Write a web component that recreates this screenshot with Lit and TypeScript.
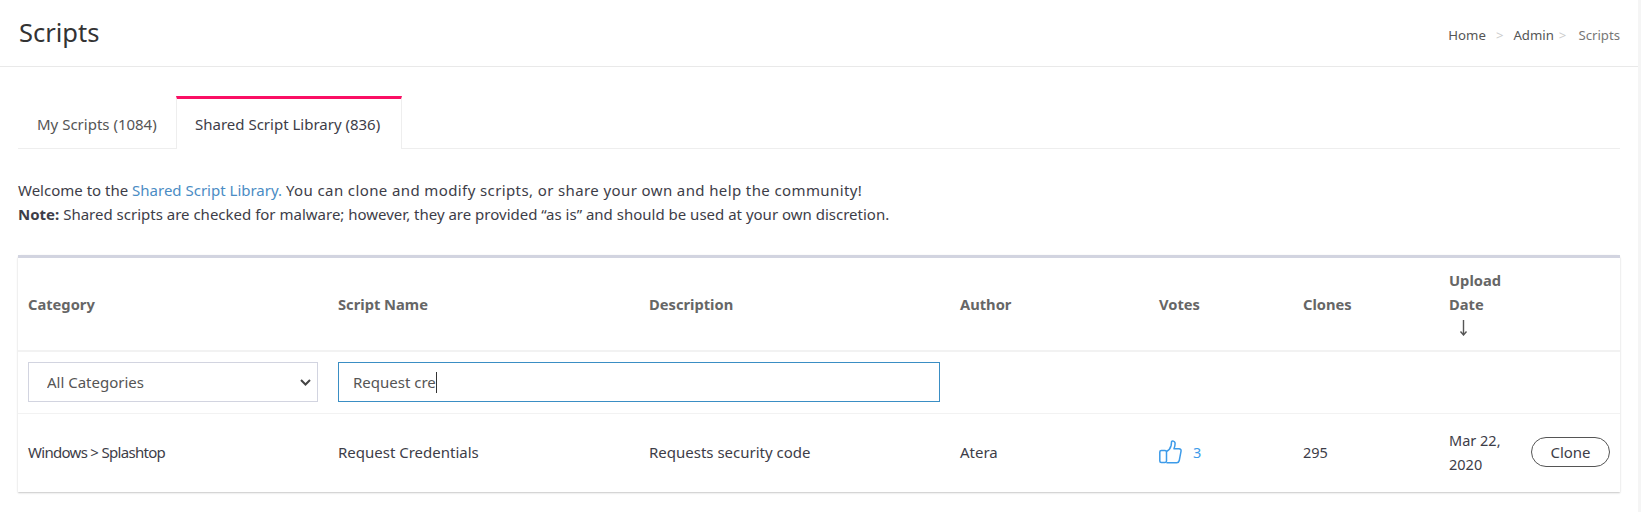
import { LitElement, html, css } from "lit";
import { customElement } from "lit/decorators.js";

@customElement("app-root")
export class AppRoot extends LitElement {
  static styles = css`
    :host { display: block; min-height: 100vh; background: #f5f5f5; font-family: "Noto Sans", "Lato", sans-serif; font-size: 15px; line-height: 24px; color: #3d3d48; }
    .page { margin-right: 3px; min-height: 100vh; background: #fff; box-sizing: border-box; }
    .head { height: 67px; box-sizing: border-box; border-bottom: 1px solid #e9e9e9; display: flex; align-items: center; justify-content: space-between; padding: 0 18px 0 19px; }
    .title { font-size: 25.5px; line-height: 34px; color: #333; margin: 0 0 3px; font-weight: 400; }
    .crumbs { display: flex; align-items: center; font-size: 13.2px; color: #555; margin-top: 4px; }
    .crumbs .sep { color: #ccc; margin: 0 10px; }
    .crumbs .sep.b { margin: 0 12px 0 5px; }
    .crumbs .cur { color: #777; }
    .body { padding: 29px 18px 0 18px; }
    .tabs { display: flex; height: 52px; border-bottom: 1px solid #eee; }
    .tab { box-sizing: border-box; width: 158px; height: 52px; padding: 16px 0 0 19px; color: #555; }
    .tab.active { height: 53px; width: 226px; border: 1px solid #eee; border-top: 3px solid #fa0f64; border-bottom: 0; background: #fff; padding: 13px 0 0 18px; color: #3d3d48; }
    .intro { margin: 29px 0 0; }
    .intro a { color: #4a8cc4; text-decoration: none; }
    .intro b { font-weight: 700; }
    .wide { letter-spacing: .39px; }
    table { margin-top: 29px; width: 100%; border-collapse: collapse; table-layout: fixed; border-top: 3px solid #d2d4e0; border-radius: 3px 3px 0 0; box-shadow: 0 1px 2px rgba(0,0,0,.22), 0 0 1px rgba(0,0,0,.04); }
    th { text-align: left; font-size: 14.7px; font-weight: 700; color: #666; padding: 10px; vertical-align: middle; border-bottom: 2px solid #f2f2f2; }
    .upload { width: 70px; }
    .arrow { display: block; margin: 4px 0 4px 10px; }
    .filters td { height: 62px; padding: 0 10px; border-bottom: 1px solid #f2f2f2; vertical-align: middle; box-sizing: border-box; }
    .select-wrap { position: relative; height: 40px; }
    select { appearance: none; display: block; width: 100%; height: 40px; box-sizing: border-box; border: 1px solid #d2d4e0; border-radius: 0; background: #fff; font: inherit; color: #555; padding: 0 0 0 18px; }
    .chev { position: absolute; right: 7px; top: 17px; pointer-events: none; }
    .input { height: 40px; box-sizing: border-box; border: 1px solid #3a8ec4; display: flex; align-items: center; padding-left: 14px; color: #555; }
    .caret { width: 1px; height: 21px; background: #333; }
    .row td { height: 79px; padding: 0 10px 2px; vertical-align: middle; box-sizing: border-box; }
    .tight { letter-spacing: -.7px; }
    .num { font-size: 14.5px; }
    .votes { display: flex; align-items: center; gap: 10px; color: #3d9be9; }
    .date-cell { display: flex; align-items: center; justify-content: space-between; font-size: 14.5px; }
    .date { width: 70px; }
    .clone { width: 79px; height: 30px; box-sizing: border-box; border: 1px solid #555; border-radius: 15px; background: #fff; font: inherit; font-size: 15px; color: #3d3d48; padding: 0; }
  `;

  render() {
    return html`
      <div class="page">
        <header class="head">
          <h1 class="title">Scripts</h1>
          <nav class="crumbs">
            <span>Home</span><span class="sep">&gt;</span><span>Admin</span><span class="sep b">&gt;</span><span class="cur">Scripts</span>
          </nav>
        </header>
        <div class="body">
          <div class="tabs">
            <div class="tab">My Scripts (1084)</div>
            <div class="tab active">Shared Script Library (836)</div>
          </div>
          <p class="intro">
            Welcome to the <a href="#">Shared Script Library.</a> <span class="wide">You can clone and modify scripts, or share your own and help the community!</span><br />
            <b>Note:</b> Shared scripts are checked for malware; however, they are provided “as is” and should be used at your own discretion.
          </p>
          <table>
            <colgroup>
              <col style="width:310px" /><col style="width:311px" /><col style="width:311px" /><col style="width:199px" /><col style="width:144px" /><col style="width:146px" /><col />
            </colgroup>
            <thead>
              <tr>
                <th>Category</th><th>Script Name</th><th>Description</th><th>Author</th><th>Votes</th><th>Clones</th>
                <th>
                  <div class="upload">Upload Date</div>
                  <svg class="arrow" width="9" height="16" viewBox="0 0 9 16" fill="none" stroke="#555" stroke-width="1.4"><path d="M4.500 0v15M1.500 11.500l3 3.500 3-3.500" /></svg>
                </th>
              </tr>
            </thead>
            <tbody>
              <tr class="filters">
                <td>
                  <div class="select-wrap">
                    <select><option>All Categories</option></select>
                    <svg class="chev" width="11" height="7" viewBox="0 0 11 7" fill="none" stroke="#444" stroke-width="2"><path d="M1 1l4.500 4.500L10 1" /></svg>
                  </div>
                </td>
                <td colspan="2"><div class="input" role="textbox"><span>Request cre</span><span class="caret"></span></div></td>
                <td colspan="4"></td>
              </tr>
              <tr class="row">
                <td><span class="tight">Windows &gt; Splashtop</span></td>
                <td>Request Credentials</td>
                <td>Requests security code</td>
                <td>Atera</td>
                <td>
                  <div class="votes">
                    <svg width="24" height="24" viewBox="0 0 24 24" fill="none" stroke="#3d9be9" stroke-width="1.5" stroke-linejoin="round">
                      <rect x=".8" y="10.500" width="6.700" height="12" rx="1.500" />
                      <path d="M7.500 11.500c2-1 4-3.500 4.600-6 .3-1.500.3-3 .5-4 .7-.9 2.900-.6 3.400 1.300.4 2-.3 4-1 6h5c1.600 0 2.300 1.200 2 2.500l-1.800 9.500c-.3 1.200-1.200 2-2.500 2H7.500" />
                    </svg>
                    <span class="num">3</span>
                  </div>
                </td>
                <td class="num">295</td>
                <td>
                  <div class="date-cell"><span class="date">Mar 22, 2020</span><button class="clone">Clone</button></div>
                </td>
              </tr>
            </tbody>
          </table>
        </div>
      </div>
    `;
  }
}
